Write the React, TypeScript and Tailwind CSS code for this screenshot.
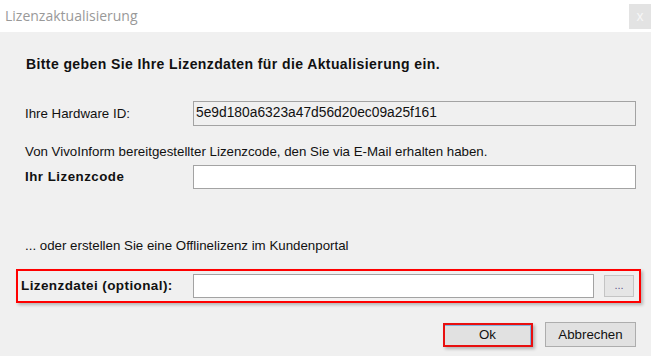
import React from "react";

const font = { fontFamily: '"Liberation Sans", Arial, sans-serif' };

const App: React.FC = () => {
  return (
    <div className="w-[651px] h-[356px] bg-[#f0f0f0] flex flex-col overflow-hidden text-[13.3px] text-[#111]" style={font}>
      {/* title bar */}
      <div className="h-[32px] bg-white flex items-start justify-between shrink-0">
        <span className="mt-[5px] ml-[5px] text-[14px] text-[#999]" style={{ fontFamily: '"Open Sans", "Noto Sans", sans-serif' }}>
          Lizenzaktualisierung
        </span>
        <div className="mt-[4px] w-[22px] h-[25px] bg-[#e3e3e3] flex items-center justify-center text-[14px] text-[#f6f6f6]">
          x
        </div>
      </div>

      <div className="flex flex-col pt-[24px]">
        <p className="ml-[26px] h-[16px] leading-[16px] font-bold text-[14px] tracking-[0.4px]">
          Bitte geben Sie Ihre Lizenzdaten für die Aktualisierung ein.
        </p>

        <div className="mt-[29px] flex items-center ml-[25px] mr-[15px]">
          <span className="w-[168px]">Ihre Hardware ID:</span>
          <div className="flex-1 h-[25px] border border-[#a3a3a3] bg-[#f0f0f0] flex items-center px-[2px] text-[13.8px]">
            5e9d180a6323a47d56d20ec09a25f161
          </div>
        </div>

        <p className="mt-[18px] ml-[25px] h-[16px] leading-[16px]">
          Von VivoInform bereitgestellter Lizenzcode, den Sie via E-Mail erhalten haben.
        </p>

        <div className="mt-[5px] flex items-center ml-[25px] mr-[15px]">
          <span className="w-[168px] font-bold text-[13.3px] tracking-[0.5px]">Ihr Lizenzcode</span>
          <div className="flex-1 h-[24px] border border-[#a3a3a3] bg-white" />
        </div>

        <p className="mt-[49px] ml-[25px] h-[16px] leading-[16px]">
          ... oder erstellen Sie eine Offlinelizenz im Kundenportal
        </p>

        <div className="mt-[15px] ml-[16px] mr-[10px] h-[34px] border-2 border-[#ff0000] flex items-center pl-[3px] pr-[5px] shadow-[2px_2px_3px_rgba(0,0,0,0.25)]">
          <span className="w-[172px] font-bold text-[13.5px] tracking-[0.4px]">Lizenzdatei (optional):</span>
          <div className="w-[401px] h-[24px] border border-[#a3a3a3] bg-white" />
          <div className="ml-[10px] w-[30px] h-[22px] border border-[#c4c4c4] bg-[#e5e5e5] flex items-center justify-center text-[11px] text-[#5a5a8a] leading-none pb-[2px]">
            ...
          </div>
        </div>

        <div className="mt-[19px] flex items-center justify-end gap-[12px] mr-[15px]">
          <div className="w-[90px] h-[24px] border-2 border-[#e81010] bg-[#e1e1e1] flex items-center justify-center shadow-[2px_2px_3px_rgba(0,0,0,0.25)]">
            <div className="w-full h-full border border-[#7fb4e0] border-l-0 border-b-0 flex items-center justify-center">Ok</div>
          </div>
          <div className="w-[91px] h-[25px] border border-[#adadad] bg-[#e1e1e1] flex items-center justify-center">
            Abbrechen
          </div>
        </div>
      </div>
    </div>
  );
};

export default App;
